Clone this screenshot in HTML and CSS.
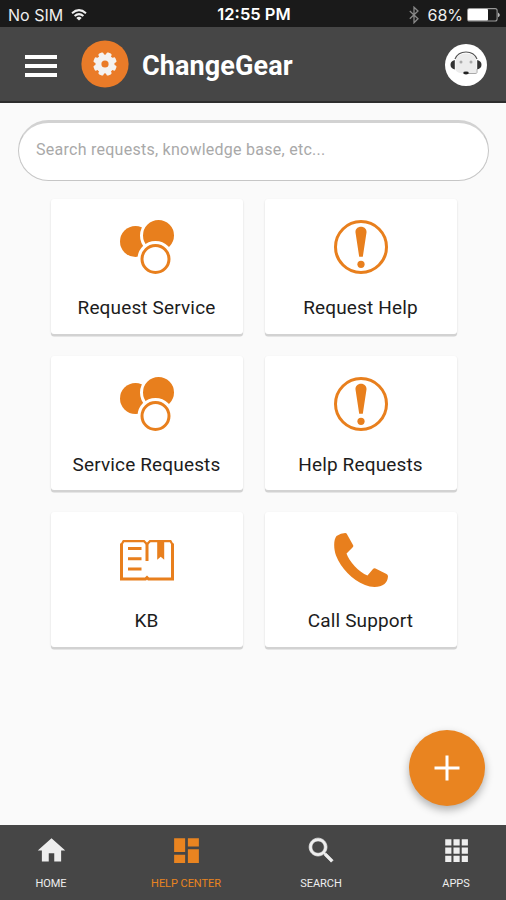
FILE: index.html
```html
<!DOCTYPE html>
<html lang="en">
<head>
  <meta charset="UTF-8" />
  <meta name="viewport" content="width=device-width, initial-scale=1.0" />
  <title>ChangeGear</title>
  <link rel="stylesheet" href="styles.css">
</head>
<body>
  <!-- Shared icons -->
  <svg class="defs" width="0" height="0">
    <symbol id="icon-service" viewBox="0 0 54 54">
      <circle class="fill" cx="15.5" cy="21.5" r="15.5"/>
      <circle class="fill gap" cx="38.5" cy="15.5" r="17"/>
      <circle class="gap-ring" cx="35.5" cy="39" r="15.5"/>
      <circle class="ring" cx="35.5" cy="39" r="13.5"/>
    </symbol>
    <symbol id="icon-alert" viewBox="0 0 54 54">
      <circle class="ring" cx="27" cy="27" r="25.5"/>
      <path class="fill" d="M27 6.8c-3.4 0-5.8 2.4-5.5 5.8l3.7 24.2h3.6l3.7-24.2c.3-3.4-2.1-5.8-5.5-5.8z"/>
      <circle class="fill" cx="27" cy="44.3" r="3.6"/>
    </symbol>
  </svg>

  <div class="app">
    <div class="status-bar">
      <div class="carrier">
        <span>No SIM</span>
        <svg width="16" height="12" viewBox="0 0 16 12" fill="none" stroke="#eee" stroke-width="2">
          <path d="M1 4.2Q8-2 15 4.2M3.6 7Q8 3.2 12.4 7"/>
          <path d="M8 11.6L5.3 8.9Q8 6.8 10.7 8.9z" fill="#eee" stroke="none"/>
        </svg>
      </div>
      <div class="clock">12:55 PM</div>
      <div class="power">
        <svg width="10" height="18" viewBox="0 0 10 18" fill="none" stroke="#888" stroke-width="1.3">
          <path d="M.8 5L9 12.8 5 16.8V1.2L9 5 .8 12.8"/>
        </svg>
        <span>68%</span>
        <svg class="battery" width="33" height="14" viewBox="0 0 33 14">
          <rect x=".6" y=".6" width="29.5" height="12.4" rx="2" fill="none" stroke="#999" stroke-width="1.1"/>
          <rect x="1" y="1" width="20" height="11.6" rx="1" fill="#fff"/>
          <path d="M31.2 4.5q3 2.4 0 4.8z" fill="#ddd"/>
        </svg>
      </div>
    </div>

    <header class="header">
      <div class="menu"><span></span><span></span><span></span></div>
      <svg class="logo" width="48" height="48" viewBox="0 0 48 48">
        <circle cx="24" cy="24" r="23.6" fill="#ea7b28"/>
        <g transform="translate(24 24)" fill="#f4f2f1">
          <circle r="9.6"/>
          <rect x="-2.7" y="-11.8" width="5.4" height="23.6" rx="1.4" transform="rotate(22.5)"/>
          <rect x="-2.7" y="-11.8" width="5.4" height="23.6" rx="1.4" transform="rotate(67.5)"/>
          <rect x="-2.7" y="-11.8" width="5.4" height="23.6" rx="1.4" transform="rotate(112.5)"/>
          <rect x="-2.7" y="-11.8" width="5.4" height="23.6" rx="1.4" transform="rotate(157.5)"/>
          <circle r="3.6" fill="#ea7b28"/>
        </g>
      </svg>
      <h1 class="title">ChangeGear</h1>
      <svg class="agent" width="42" height="42" viewBox="0 0 42 42">
        <circle cx="21" cy="21" r="21" fill="#fff"/>
        <path d="M10 15Q13 8 21 8T32 15" fill="none" stroke="#555" stroke-width="1.2"/>
        <path d="M10.500 26V17Q12 9.500 21 9.500T31.500 17v12.500H21q-9 0-10.500-3.500z" fill="#ececec"/>
        <path d="M9.800 16v9.500Q5.500 24.500 5.500 20.800t4.300-4.800zM32.200 16v9.500q4.300-1 4.300-4.700t-4.300-4.800z" fill="#333"/>
        <circle cx="16" cy="18" r="1.500" fill="#aaa"/>
        <circle cx="26" cy="18" r="1.500" fill="#aaa"/>
        <path d="M32 25v3.500q0 1-2 1h-9" fill="none" stroke="#aaa" stroke-width="1"/>
        <ellipse cx="21" cy="29" rx="2.800" ry="1.400" fill="#222"/>
      </svg>
    </header>

    <main class="content">
      <input class="search" type="text" placeholder="Search requests, knowledge base, etc...">
      <div class="cards">
        <a class="card">
          <svg class="card-icon"><use href="#icon-service"/></svg>
          <span>Request Service</span>
        </a>
        <a class="card">
          <svg class="card-icon"><use href="#icon-alert"/></svg>
          <span>Request Help</span>
        </a>
        <a class="card">
          <svg class="card-icon"><use href="#icon-service"/></svg>
          <span>Service Requests</span>
        </a>
        <a class="card">
          <svg class="card-icon"><use href="#icon-alert"/></svg>
          <span>Help Requests</span>
        </a>
        <a class="card">
          <svg class="card-icon" viewBox="0 0 54 54">
            <path class="ring" d="M1.500 10.500V46H25.500L27 44.500 28.500 46H52.500V10.500"/>
            <path class="ring thin" d="M1.500 11.500L3.500 8.200H24L27 11.200 30 8.200H50.500L52.500 11.500"/>
            <path class="ring" d="M27 10v18M8 15.500h13.500M8 25.800h13.500M8 36h13.500"/>
            <path class="fill" d="M37.200 8h7v18.800l-3.500-3-3.500 3z"/>
          </svg>
          <span>KB</span>
        </a>
        <a class="card">
          <svg class="card-icon" viewBox="0 0 54 54">
            <path class="fill" d="M2.500 3Q7 0 11.200 0Q12.500 0 13 1.200L19 12Q19.800 13.500 18.500 14.500L12.500 20.500C15 28 25 39.500 33.500 42.500L39 36Q40 34.700 41.500 35.400L52.500 41Q54 41.800 54 43.500Q53.500 48.500 50.500 51C46 54.500 38 55 31 52C18 46.500 7 35.500 2 22.500C-.500 15.500-.500 6.500 2.500 3z"/>
          </svg>
          <span>Call Support</span>
        </a>
      </div>
    </main>

    <button class="fab" aria-label="Add">
      <svg width="26" height="26" viewBox="0 0 26 26" stroke="#fff" stroke-width="3"><path d="M13 .5v25M.5 13h25"/></svg>
    </button>

    <nav class="tabs">
      <a class="tab">
        <svg viewBox="0 0 24 24"><path d="M10 20v-6h4v6h5v-8h3L12 3 2 12h3v8z"/></svg>
        <span>HOME</span>
      </a>
      <a class="tab active">
        <svg viewBox="0 0 24 24"><path d="M3 13h8V3H3v10zm0 8h8v-6H3v6zm10 0h8V11h-8v10zm0-18v6h8V3h-8z"/></svg>
        <span>HELP CENTER</span>
      </a>
      <a class="tab">
        <svg class="bold" viewBox="0 0 24 24"><path d="M15.500 14h-.790l-.280-.270C15.410 12.590 16 11.110 16 9.500 16 5.910 13.090 3 9.500 3S3 5.910 3 9.500 5.910 16 9.500 16c1.610 0 3.090-.590 4.230-1.570l.270.280v.790l5 4.990L20.490 19l-4.990-5zm-6 0C7.010 14 5 11.990 5 9.500S7.010 5 9.500 5 14 7.010 14 9.500 11.990 14 9.500 14z"/></svg>
        <span>SEARCH</span>
      </a>
      <a class="tab">
        <svg viewBox="0 0 24 24"><path d="M3.800 3.800h4.500v4.500H3.800zM9.800 3.800h4.500v4.500H9.800zM15.800 3.800h4.500v4.500h-4.500zM3.800 9.800h4.500v4.500H3.800zM9.800 9.800h4.500v4.500H9.800zM15.800 9.800h4.500v4.500h-4.500zM3.800 15.800h4.500v4.500H3.800zM9.800 15.800h4.500v4.500H9.800zM15.800 15.800h4.500v4.500h-4.500z"/></svg>
        <span>APPS</span>
      </a>
    </nav>
  </div>
</body>
</html>
```
FILE: styles.css
```css
* { box-sizing: border-box; }
html, body {
  margin: 0; padding: 0;
  height: 100%;
  overflow: hidden;
  font-family: Roboto, sans-serif;
  background: #fafafa;
}
.defs { position: absolute; }
.app {
  position: relative;
  display: flex; flex-direction: column;
  width: 506px; height: 900px;
  overflow: hidden;
}

/* Status bar */
.status-bar {
  display: flex; align-items: center;
  height: 27px;
  padding: 2px 6px 0 8px;
  background: #1a1a1a; color: #eee;
  font: 16px/1 Inter, sans-serif;
}
.carrier, .power {
  flex: 1;
  display: flex; align-items: center;
  gap: 8px;
}
.power { justify-content: flex-end; }
.battery { margin-left: -4px; }
.clock {
  font-size: 16.500px; font-weight: 600;
  color: #fff;
}

/* Header */
.header {
  display: flex; align-items: center;
  height: 76px;
  padding: 0 19px 0 25px;
  background: #464646;
  border-bottom: 2px solid #2d2d2d;
}
.menu {
  display: flex; flex-direction: column;
  gap: 5px;
  width: 32px;
  margin-right: 24px;
  padding-top: 3px;
}
.menu span { height: 4px; background: #fff; }
.logo { margin-right: 13px; }
.title {
  flex: 1;
  margin: 0;
  padding-top: 4px;
  font-size: 27px; font-weight: 700;
  letter-spacing: 0.1px;
  color: #fff;
}
.agent { margin-top: 2px; }

/* Search + cards */
.content {
  flex: 1;
  padding: 17px 17px 0 18px;
}
.search {
  display: block;
  width: 100%; height: 61px;
  padding: 0 17px 4px;
  border: 1px solid #c6c6c6;
  border-top: 3px solid #d2d2d2;
  border-radius: 31px;
  background: #fff;
  font: 16px Roboto, sans-serif;
  letter-spacing: 0.26px;
}
.search::placeholder { color: #a9a9a9; }
.cards {
  display: grid;
  grid-template-columns: 192px 192px;
  grid-auto-rows: 134.500px;
  gap: 22px;
  padding: 18px 0 0 33px;
}
.card {
  display: flex; flex-direction: column; align-items: center;
  padding: 21px 1px 0 0;
  border-radius: 3px;
  background: #fff;
  box-shadow: 0 2.500px 0 #d2d2d2, 0 1px 2px rgba(0,0,0,0.15);
  font-size: 19px; line-height: 24px;
  letter-spacing: 0.15px;
  color: #1c1c1c;
}
.card-icon {
  width: 54px; height: 54px;
  margin-bottom: 22px;
}
.fill { fill: #e87f1d; }
.ring { fill: none; stroke: #e87f1d; stroke-width: 3; }
.gap { stroke: #fff; stroke-width: 3; }
.gap-ring { fill: #fff; stroke: #fff; stroke-width: 5; }
.thin { stroke-width: 2.200; }

/* Floating button */
.fab {
  position: absolute;
  right: 21px; bottom: 94px;
  display: flex; align-items: center; justify-content: center;
  width: 76px; height: 76px;
  padding: 0;
  border: none; border-radius: 50%;
  background: #e98420;
  box-shadow: 0 4px 8px rgba(0,0,0,0.3);
}

/* Bottom tabs */
.tabs {
  display: flex; justify-content: center;
  height: 75px;
  padding-left: 1px;
  background: #464646;
}
.tab {
  flex: 0 0 135px;
  display: flex; flex-direction: column; align-items: center;
  padding-top: 9px;
  font-size: 11px; line-height: 14px;
  letter-spacing: -0.05px;
  color: #eee;
}
.tab svg {
  width: 33px; height: 33px;
  margin-bottom: 10px;
  fill: currentColor;
}
.tab .bold { stroke: currentColor; stroke-width: 0.5; }
.tab.active { color: #e98420; }
```
